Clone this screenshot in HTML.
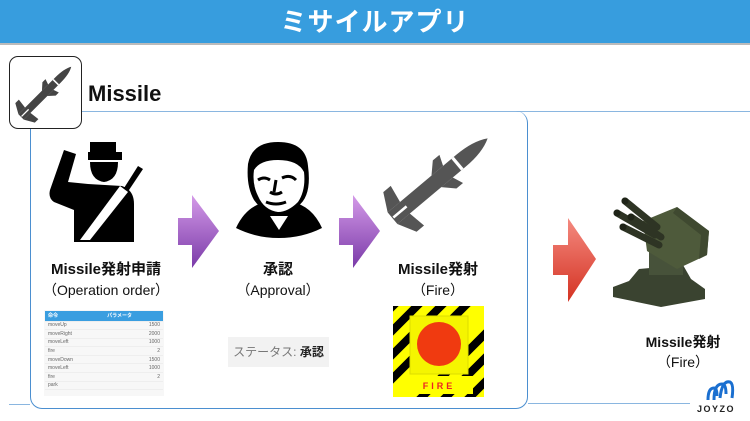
<!DOCTYPE html>
<html><head><meta charset="utf-8"><style>
*{margin:0;padding:0;box-sizing:border-box}
body{width:750px;height:421px;background:#fff;position:relative;overflow:hidden;font-family:"Liberation Sans","Noto Sans CJK JP",sans-serif;color:#111}
.hdr{position:absolute;left:0;top:0;width:750px;height:45px;background:#379dde;border-bottom:2px solid #bbb;color:#fff;font-weight:bold;font-size:26px;text-align:center;line-height:44px;letter-spacing:1px}
.abs{position:absolute}
.lbl{position:absolute;text-align:center;width:160px}
.b{font-weight:bold;font-size:15px;line-height:18px}
.n{font-size:14px;margin-top:2px;line-height:18px}
table{border-collapse:collapse;font-size:5px;color:#666}
td{height:8.6px;padding:0 3px;border-bottom:1px solid #eee}
svg{overflow:visible}
</style></head><body>
<div class="hdr">ミサイルアプリ</div>
<div class="abs" style="left:81px;top:111px;width:669px;height:1px;background:#8ab6e0"></div>
<div class="abs" style="left:30px;top:111px;width:498px;height:298px;border:1.5px solid #4b8fd0;border-top:none;border-radius:0 12px 12px 12px"></div>
<div class="abs" style="left:528px;top:403px;width:162px;height:1px;background:#8ab6e0"></div>
<div class="abs" style="left:9px;top:404px;width:21px;height:1px;background:#8ab6e0"></div>

<div class="abs" style="left:9px;top:56px;width:73px;height:73px;border:1.5px solid #222;border-radius:9px;background:#fff"></div>
<svg class="abs" style="left:9px;top:56px" width="73" height="73" viewBox="0 0 100 100">
<g transform="translate(50,50) rotate(-45) scale(0.86)" fill="#444">
<path d="M-55,-6 L28,-6 Q48,-6 58,0 Q48,6 28,6 L-55,6 Z"/>
<path d="M-2,-6 L8,-15 L15,-15 L12,-6 Z M-2,6 L8,15 L15,15 L12,6 Z"/>
<path d="M-55,-6 L-46,-22 L-38,-22 L-40,-6 Z M-55,6 L-46,22 L-38,22 L-40,6 Z"/>
<rect x="22" y="-6" width="2.5" height="12" fill="#fff"/>
<rect x="-54" y="-1" width="16" height="2" fill="#fff"/>
</g></svg>
<div class="abs" style="left:88px;top:81px;font-size:22px;font-weight:bold">Missile</div>

<!-- soldier -->
<svg class="abs" style="left:48px;top:140px" width="100" height="100" viewBox="0 0 100 100">
<path d="M42,2 h26 v10 h6 v8 h-34 v-8 h2 z" fill="#000"/>
<path d="M42,22 h28 q0,18 -14,20 q-14,-2 -14,-20z" fill="#000"/>
<path d="M16,10 l12,4 l-8,28 l20,2 l34,2 q12,4 12,18 v38 h-60 v-32 l-20,-8 q-6,-4 -4,-12 z" fill="#000"/>
<path d="M90,26 l5,3 l-20,30 l-4,-3z" fill="#000"/>
<path d="M72,46 l8,6 l-38,48 h-10z" fill="#fff"/>
</svg>
<!-- obama -->
<svg class="abs" style="left:236px;top:140px" width="86" height="96" viewBox="0 0 86 96">
<path d="M0,88 q10,-22 30,-26 l26,0 q20,4 30,26 q-20,10 -43,10 q-23,0 -43,-10z" fill="#000"/>
<path d="M12,24 q4,-22 30,-22 q28,0 30,24 q4,30 -10,40 q-10,8 -20,8 q-14,0 -24,-14 q-8,-14 -6,-36z" fill="#000"/>
<path d="M18,30 q6,-10 24,-10 q20,0 26,12 q2,18 -6,30 q-10,10 -20,10 q-14,-2 -20,-16 q-6,-12 -4,-26z" fill="#fff"/>
<path d="M22,40 q6,-4 12,0 M46,38 q8,-4 14,2 M34,52 q6,4 12,0 M30,62 q10,4 20,0 M40,40 l-2,12" stroke="#000" stroke-width="3" fill="none"/>
<path d="M34,76 l9,14 l9,-14" fill="#fff"/>
</svg>
<!-- missile -->
<svg class="abs" style="left:388px;top:132px" width="104" height="96" viewBox="0 0 104 96">
<g transform="translate(50,48) rotate(-40) scale(1.08)" fill="#555">
<path d="M-55,-7 L28,-7 Q48,-7 60,0 Q48,7 28,7 L-55,7 Z"/>
<path d="M-2,-7 L8,-17 L16,-17 L12,-7 Z M-2,7 L8,17 L16,17 L12,7 Z"/>
<path d="M-55,-7 L-46,-24 L-37,-24 L-40,-7 Z M-55,7 L-46,24 L-37,24 L-40,7 Z"/>
<rect x="22" y="-7" width="3" height="14" fill="#fff"/>
<rect x="-54" y="-1.2" width="16" height="2.4" fill="#fff"/>
</g></svg>

<svg class="abs" style="left:178px;top:195px" width="42" height="75"><defs><linearGradient id="p" x1="0" y1="0" x2="0" y2="1"><stop offset="0" stop-color="#d49ae8"/><stop offset="1" stop-color="#7a3aa8"/></linearGradient></defs><path d="M0,23 H14 V0 L41,36 L14,73 V50 H0 Z" fill="url(#p)"/></svg>
<svg class="abs" style="left:339px;top:195px" width="42" height="75"><path d="M0,23 H14 V0 L41,36 L14,73 V50 H0 Z" fill="url(#p)"/></svg>
<svg class="abs" style="left:553px;top:218px" width="44" height="85"><defs><linearGradient id="r" x1="0" y1="0" x2="0" y2="1"><stop offset="0" stop-color="#f48a80"/><stop offset="1" stop-color="#d43222"/></linearGradient></defs><path d="M0,27 H15 V0 L43,41 L15,84 V57 H0 Z" fill="url(#r)"/></svg>

<!-- turret -->
<svg class="abs" style="left:605px;top:195px" width="120" height="112" viewBox="0 0 120 112">
<path d="M34,74 l44,-4 l8,14 l14,10 v10 l-44,8 l-48,-10 v-10 l16,-6z" fill="#3a4330"/>
<path d="M44,56 h34 v24 h-34z" fill="#47523a"/>
<path d="M38,26 l34,-14 l32,24 l-2,24 l-30,14 l-30,-18z" fill="#4e5a3b"/>
<path d="M72,12 l32,24 l-2,24 l-8,4 l2,-24 l-28,-22z" fill="#3f4930"/>
<g stroke="#2e3424" stroke-width="7" stroke-linecap="round"><path d="M52,32 L20,6"/><path d="M50,40 L12,18"/><path d="M56,42 L26,22"/><path d="M54,50 L18,32"/></g>
<g fill="#1f2418"><circle cx="20" cy="6" r="3.5"/><circle cx="12" cy="18" r="3.5"/><circle cx="26" cy="22" r="3.5"/><circle cx="18" cy="32" r="3.5"/></g>
</svg>

<div class="lbl" style="left:26px;top:261px"><div class="b">Missile発射申請</div><div class="n">（Operation order）</div></div>
<div class="lbl" style="left:198px;top:261px"><div class="b">承認</div><div class="n">（Approval）</div></div>
<div class="lbl" style="left:358px;top:261px"><div class="b">Missile発射</div><div class="n">（Fire）</div></div>
<div class="lbl" style="left:603px;top:333px"><div class="b" style="font-size:14px">Missile発射</div><div class="n">（Fire）</div></div>

<div class="abs" style="left:44px;top:310px;width:120px;height:86px;background:#f7f7f7">
<table style="width:118px;margin:1px">
<tr style="background:#3a9ee0;color:#fff;font-weight:bold"><td style="height:10px">命令</td><td>パラメータ</td></tr>
<tr><td>moveUp</td><td align="right">1500</td></tr><tr><td>moveRight</td><td align="right">2000</td></tr><tr><td>moveLeft</td><td align="right">1000</td></tr><tr><td>fire</td><td align="right">2</td></tr><tr><td>moveDown</td><td align="right">1500</td></tr><tr><td>moveLeft</td><td align="right">1000</td></tr><tr><td>fire</td><td align="right">2</td></tr><tr><td>park</td><td></td></tr>
</table></div>
<div class="abs" style="left:228px;top:337px;width:101px;height:30px;background:#f2f2f2;font-size:12px;color:#777;line-height:30px;text-align:center">ステータス: <b style="color:#222">承認</b></div>

<svg class="abs" style="left:393px;top:306px" width="91" height="91" viewBox="0 0 91 91">
<defs><clipPath id="c"><rect width="91" height="91"/></clipPath></defs>
<rect width="91" height="91" fill="#ff0"/>
<g clip-path="url(#c)" stroke="#000" stroke-width="8"><path d="M-20,20 l40,-40 M-20,44 l64,-64 M-20,68 l88,-88 M-20,92 l112,-112 M4,116 l112,-112 M28,116 l88,-88 M52,116 l64,-64 M76,116 l40,-40"/></g>
<rect x="17" y="10" width="58" height="58" fill="#f5f500" stroke="#dd0" />
<circle cx="46" cy="38" r="22" fill="#f03a10"/>
<rect x="24" y="70" width="56" height="18" fill="#ff0"/>
<text x="46" y="83" font-family="Liberation Sans" font-weight="bold" font-size="9" fill="#e22" text-anchor="middle" letter-spacing="3">FIRE</text>
</svg>

<svg class="abs" style="left:704px;top:380px" width="30" height="22" viewBox="0 0 30 22">
<path d="M4,20 q0,-12 6,-12 q3,0 3,8 M10,20 q0,-16 8,-16 q4,0 4,10 M16,18 q2,-18 10,-16 q4,2 2,16" stroke="#1a6fd0" stroke-width="3" fill="none"/></svg>
<div class="abs" style="left:697px;top:404px;font-size:9px;font-weight:bold;letter-spacing:1.5px;color:#222">JOYZO</div>
</body></html>
